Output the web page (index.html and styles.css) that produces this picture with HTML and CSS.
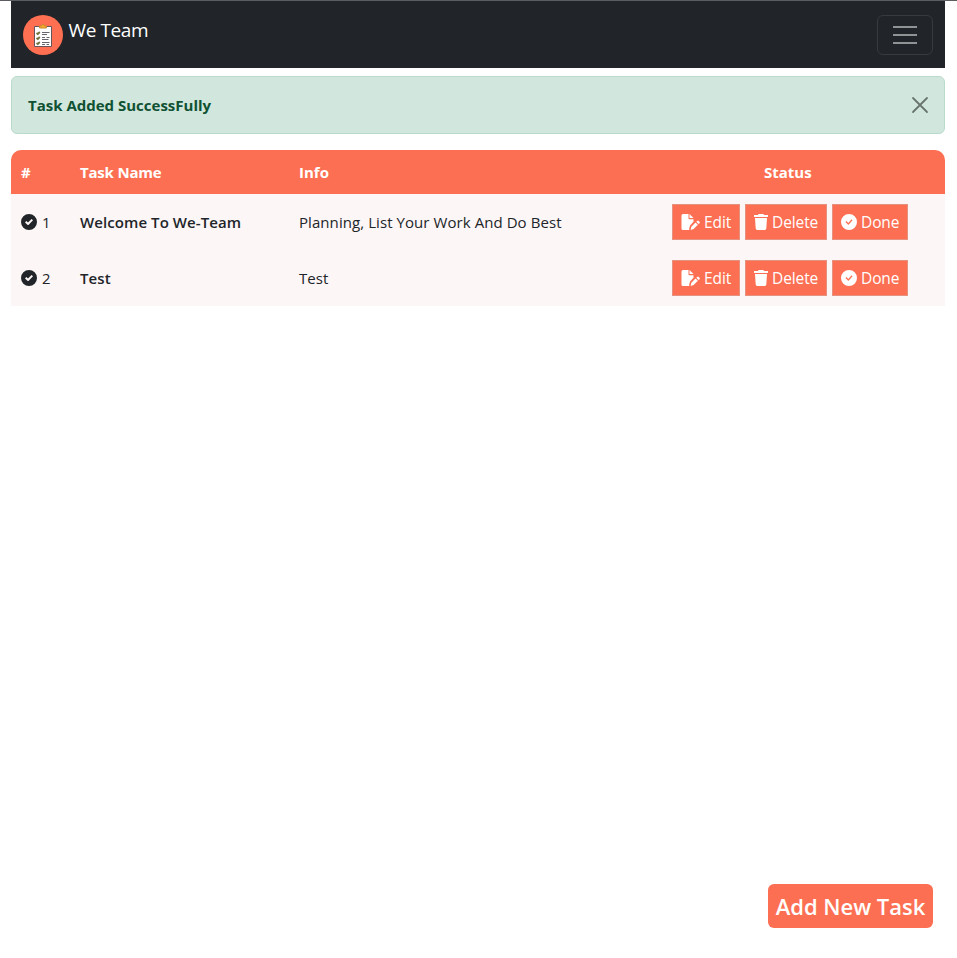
FILE: index.html
```html
<!DOCTYPE html>
<html lang="en">
<head>
<meta charset="utf-8">
<title>We Team</title>
<link rel="stylesheet" href="styles.css">
</head>
<body>
<svg class="sprite" aria-hidden="true">
  <symbol id="check" viewBox="0 0 16 16"><path fill-rule="evenodd" d="M8 0a8 8 0 1 0 0 16A8 8 0 0 0 8 0ZM12 6.300 7.700 10.800a.9.9 0 0 1-1.250 0L4 8.500 5.400 7.100 7 8.600l3.600-3.700Z"/></symbol>
  <symbol id="done" viewBox="0 0 16 16"><path fill-rule="evenodd" d="M16 8A8 8 0 1 1 0 8a8 8 0 0 1 16 0ZM10.6 5.35 7.3 8.9 5.4 7.1l-.9.9 2.4 2.4a.6.6 0 0 0 .9 0l3.7-4.2Z"/></symbol>
  <symbol id="trash" viewBox="0 0 14 16"><path d="M0 1h4l.6-1h4.8l.6 1h4v2H0ZM1 4h12l-.7 10.6a1.5 1.5 0 0 1-1.5 1.4H3.2a1.5 1.5 0 0 1-1.5-1.4Z"/></symbol>
  <symbol id="edit" viewBox="0 0 18 16"><path d="M1.5 0H7v4.5a.8.8 0 0 0 .8.8H12v2.5l-3.5 3.6-.9 3.6.3 1H1.5A1.5 1.5 0 0 1 0 14.500V1.500A1.500 1.500 0 0 1 1.500 0ZM8 0l4 4H8ZM15.700 6.900a1 1 0 0 1 1.400 0l.9.900a1 1 0 0 1 0 1.400l-.9.900-2.300-2.300ZM14.100 8.500l2.300 2.300-4.300 4.300-3 .8.700-3.100Z"/></symbol>
</svg>
<div class="page">
  <nav class="navbar">
    <a class="brand">
      <svg class="logo" viewBox="0 0 40 40">
        <circle cx="20" cy="20" r="20" fill="#ff6f51"/>
        <path d="M11.500 11.500h17v20h-17Z" fill="#fff" stroke="#65545a" stroke-width="1"/>
        <path d="M16.500 13v-2h2a1.500 1.500 0 0 1 3 0h2V13Z" fill="#f6ad2b" stroke="#c98a30" stroke-width="1"/>
        <path d="M19 17.500h7.500M19 19.500h5M19 22.500h3M23.500 22.500h3M19 24.500h6.500M19 27.500h7.500M19 29.500h3M23.500 29.500h2.500" stroke="#66666c" stroke-width="1"/>
        <path d="m13.500 18 1.300 1 2-2M13.500 23l1.300 1 2-2M13.500 28l1.300 1 2-2" fill="none" stroke="#70713c" stroke-width="1.800"/>
      </svg>
      <span class="brand-name">We Team</span>
    </a>
    <button class="toggler" aria-label="Toggle navigation"><svg viewBox="0 0 30 30"><path d="M3 7h24M3 15h24M3 23h24"/></svg></button>
  </nav>
  <div class="alert">
    <strong class="alert-text">Task Added SuccessFully</strong>
    <svg class="close" viewBox="0 0 16 16"><path d="m1 1 14 14M15 1 1 15"/></svg>
  </div>
  <div class="table">
    <div class="row head">
      <span class="h-num">#</span><span class="h-name">Task Name</span><span class="h-info">Info</span><span class="h-status">Status</span>
    </div>
    <div class="row">
      <span class="num"><svg><use href="#check"/></svg>1</span>
      <span class="name">Welcome To We-Team</span>
      <span class="info">Planning, List Your Work And Do Best</span>
      <span class="actions">
        <button class="btn edit"><svg><use href="#edit"/></svg>Edit</button>
        <button class="btn delete"><svg><use href="#trash"/></svg>Delete</button>
        <button class="btn done"><svg><use href="#done"/></svg>Done</button>
      </span>
    </div>
    <div class="row">
      <span class="num"><svg><use href="#check"/></svg>2</span>
      <span class="name">Test</span>
      <span class="info">Test</span>
      <span class="actions">
        <button class="btn edit"><svg><use href="#edit"/></svg>Edit</button>
        <button class="btn delete"><svg><use href="#trash"/></svg>Delete</button>
        <button class="btn done"><svg><use href="#done"/></svg>Done</button>
      </span>
    </div>
  </div>
  <button class="add">Add New Task</button>
</div>
</body>
</html>
```
FILE: styles.css
```css
* { box-sizing: border-box; }
body { margin: 0; background: #fff; color: #212529; font: 400 15.500px/24px "Open Sans", "Noto Sans", sans-serif; }
button { font: inherit; margin: 0; padding: 0; }
svg { display: block; flex: none; }
.sprite { position: absolute; width: 0; height: 0; }
.page { height: 958px; padding: 0 12px 30px 11px; border-top: 1px solid #5b5d61; display: flex; flex-direction: column; }
.navbar { height: 67px; background: #212529; padding: 0 12px; display: flex; align-items: center; justify-content: space-between; }
.brand { display: flex; align-items: flex-start; gap: 5.500px; color: #fff; }
.logo { width: 40px; height: 40px; }
.brand-name { font-size: 19px; line-height: 30px; letter-spacing: -.4px; white-space: nowrap; }
.toggler { width: 56px; height: 40px; border: 1px solid #373b3e; border-radius: 6px; background: none; display: flex; align-items: center; justify-content: center; }
.toggler svg { width: 30px; height: 30px; }
.toggler path { stroke: #909294; stroke-width: 2; }
.alert { margin-top: 8px; height: 58px; border: 1px solid #badbcc; border-radius: 6px; background: #d1e7dd; color: #0f5132; padding: 0 16px; display: flex; align-items: center; justify-content: space-between; }
.alert-text { font-size: 15px; font-weight: 700; }
.close { width: 16px; height: 16px; overflow: visible; }
.close path { stroke: #68746e; stroke-width: 1.800; stroke-linecap: round; }
.table { margin-top: 16px; border-radius: 10px 10px 0 0; overflow: hidden; }
.row { display: grid; grid-template-columns: 59px 219px 373px 273px; height: 56px; align-items: center; background: #fcf6f6; padding-left: 10px; white-space: nowrap; }
.head { height: 44px; background: #fd6f52; color: #fff; font-weight: 700; font-size: 15px; }
.head .h-name { letter-spacing: -.2px; }
.h-status { padding-left: 92px; }
.num { display: flex; align-items: center; gap: 5px; font-size: 14.800px; }
.num svg { width: 16px; height: 16px; fill: #212529; }
.name { font-weight: 600; font-size: 15px; letter-spacing: .08px; }
.info { font-size: 15px; letter-spacing: .07px; }
.actions { display: flex; gap: 5px; }
.btn { height: 36px; display: flex; align-items: center; gap: 4px; padding-left: 8px; border: 1px solid #e5917f; background: #fd6f52; color: #fff; letter-spacing: -.1px; }
.btn svg { fill: #fff; height: 16px; }
.edit { width: 68px; }
.edit svg { width: 19px; }
.delete { width: 82px; }
.delete svg { width: 14px; }
.done { width: 76px; }
.done svg { width: 16px; }
.add { margin: auto 12px 0 0; align-self: flex-end; width: 165px; height: 44px; border: 0; border-radius: 6px; background: #fd6f52; color: #fff; font-weight: 600; font-size: 22px; white-space: nowrap; }
```
